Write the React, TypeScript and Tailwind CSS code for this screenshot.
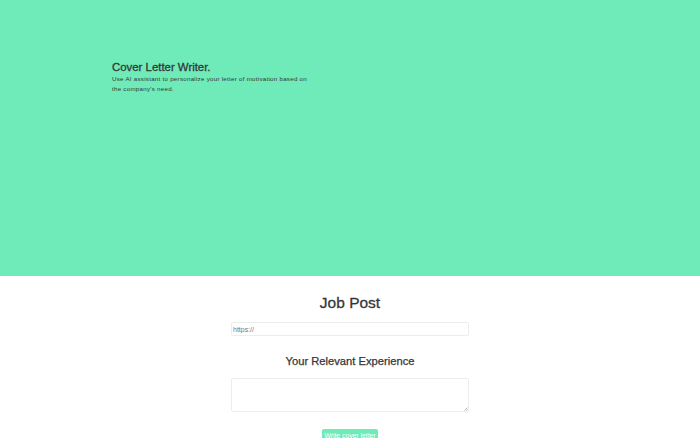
const App = () => {
  return (
    <div className="h-[438px] overflow-hidden bg-white font-['Liberation_Sans',Arial,sans-serif] text-[#363636] antialiased">
      <section className="h-[276px] bg-[#6eebb8] pt-[61px] pl-[112px]">
        <h1 className="text-[11.4px] leading-[13px] font-normal [-webkit-text-stroke:0.3px_#363636]">Cover Letter Writer.</h1>
        <p className="w-[200px] text-[6.2px] leading-[10px] tracking-[0.26px]">
          Use AI assistant to personalize your letter of motivation based on the company's need.
        </p>
      </section>
      <section className="flex flex-col items-center">
        <h2 className="mt-[17px] text-[15.5px] leading-[20px] font-normal [-webkit-text-stroke:0.3px_#363636]">Job Post</h2>
        <input
          className="mt-[9px] h-[14px] w-[238px] rounded-[2px] border border-[#ededed] bg-white px-[1px] text-[7px] outline-none placeholder:text-[#777]"
          placeholder="https://"
        />
        <h3 className="mt-[18px] text-[11.2px] leading-[14px] font-normal [-webkit-text-stroke:0.25px_#363636]">Your Relevant Experience</h3>
        <div className="relative mt-[10px] h-[34px] w-[238px]">
          <textarea className="block h-full w-full resize-none rounded-[2px] border border-[#ededed] bg-white outline-none" />
          <svg className="absolute right-[1px] bottom-[1px] h-[4px] w-[4px]" viewBox="0 0 4 4">
            <path d="M0.5 3.5L3.5 0.5M2.2 3.5L3.5 2.2" stroke="#8a8a8a" strokeWidth="0.6" fill="none" />
          </svg>
        </div>
        <button className="mt-[17px] h-[14px] w-[56px] rounded-[2px] bg-[#6eebb8] text-[6.8px] text-white">
          Write cover letter
        </button>
      </section>
    </div>
  );
};

export default App;
